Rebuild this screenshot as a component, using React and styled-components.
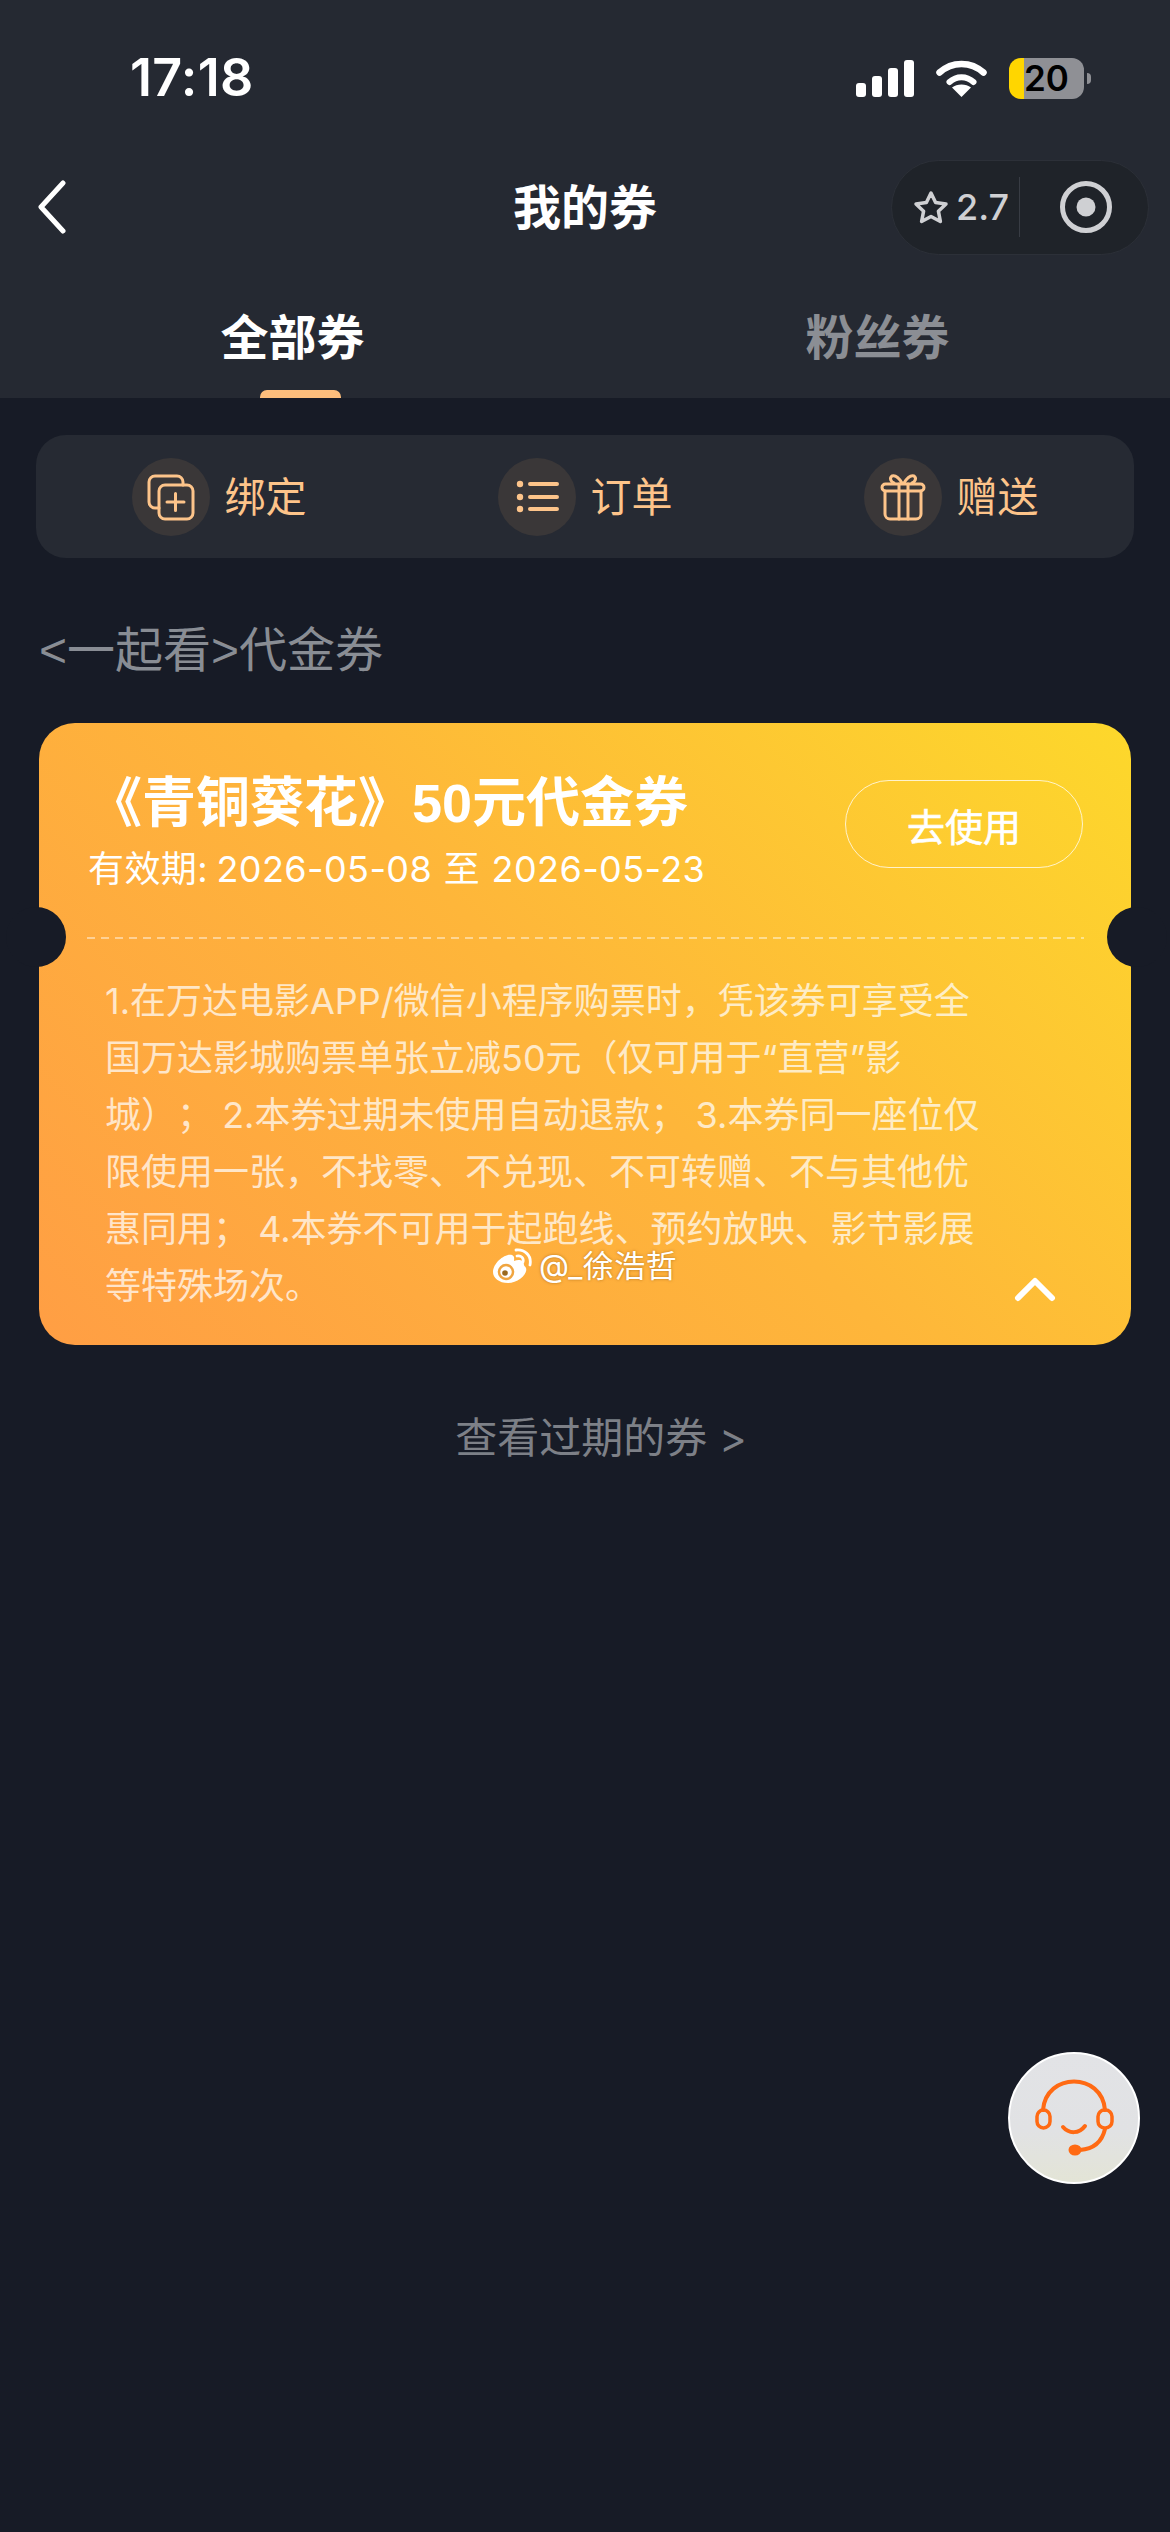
import React from "react";
import styled, { createGlobalStyle } from "styled-components";

const FONT = `Inter, "Noto Sans CJK SC", sans-serif`;
const ARIAL_FONT = `"Liberation Sans", "Noto Sans CJK SC", sans-serif`;

const Global = createGlobalStyle`
  html, body { margin: 0; padding: 0; background: #171b26; }
  * { box-sizing: border-box; }
`;

const Page = styled.div`
  position: relative;
  width: 1170px;
  height: 2532px;
  overflow: hidden;
  background: #171b26;
  font-family: ${FONT};
  text-spacing-trim: space-all;
`;

const Header = styled.header`
  height: 398px;
  background: #252932;
  display: flex;
  flex-direction: column;
`;

const StatusBar = styled.div`
  height: 154px;
  padding: 2px 86px 0 130px;
  display: flex;
  align-items: center;
  justify-content: space-between;
`;

const Time = styled.span`
  font-size: 52px;
  font-weight: 600;
  line-height: 60px;
  color: #fff;
  letter-spacing: 0.3px;
`;

const StatusIcons = styled.div`
  display: flex;
  align-items: center;
`;

const Signal = styled.svg`
  width: 58px;
  height: 37px;
  margin-right: 22px;
`;

const Wifi = styled.svg`
  width: 51px;
  height: 37px;
  margin-right: 22px;
`;

const Battery = styled.div`
  position: relative;
  width: 75px;
  height: 41px;
  border-radius: 12px;
  background: linear-gradient(90deg, #ffd600 0 15px, #8f9095 15px);
  display: flex;
  align-items: center;
  justify-content: center;
  color: #000;
  font-size: 35px;
  font-weight: 600;
  &::after {
    content: "";
    position: absolute;
    right: -7px;
    top: 15px;
    width: 4px;
    height: 11px;
    border-radius: 0 4px 4px 0;
    background: #8f9095;
  }
`;

const Nav = styled.div`
  height: 106px;
  padding: 0 21px;
  display: grid;
  grid-template-columns: 1fr auto 1fr;
  align-items: center;
`;

const Back = styled.svg`
  width: 30px;
  height: 54px;
  margin-left: 16px;
`;

const Title = styled.h1`
  margin: 0;
  padding-top: 2px;
  font-size: 48px;
  line-height: 60px;
  font-weight: 700;
  color: #fff;
`;

const Capsule = styled.div`
  justify-self: end;
  width: 258px;
  height: 95px;
  border-radius: 48px;
  background: #1f2329;
  border: 1px solid #2c3038;
  display: flex;
  align-items: center;
  padding-left: 21px;
`;

const Rating = styled.div`
  width: 107px;
  height: 60px;
  display: flex;
  align-items: center;
  gap: 7px;
  color: #cfd0d3;
  font-size: 36px;
  font-weight: 500;
  border-right: 1px solid #383c44;
`;

const Target = styled.svg`
  width: 54px;
  height: 54px;
  margin-left: 39px;
`;

const Tabs = styled.nav`
  flex: 1;
  display: grid;
  grid-template-columns: 1fr 1fr;
`;

const Tab = styled.div`
  position: relative;
  padding-top: 54px;
  text-align: center;
  font-size: 48px;
  line-height: 48px;
  font-weight: 700;
  color: ${(p) => (p.$active ? "#fff" : "#8b8e94")};
`;

const TabMark = styled.span`
  position: absolute;
  left: 260px;
  bottom: 0;
  width: 81px;
  height: 8px;
  border-radius: 7px 7px 0 0;
  background: #fdbe7c;
`;

const Main = styled.main`
  padding: 37px 36px 0;
`;

const Toolbar = styled.div`
  height: 123px;
  border-radius: 30px;
  background: #262a33;
  display: flex;
  align-items: center;
  justify-content: space-around;
`;

const Action = styled.div`
  display: flex;
  align-items: center;
  gap: 15px;
  font-size: 41px;
  line-height: 48px;
  color: #fdc48a;
`;

const ActionIcon = styled.svg`
  width: 78px;
  height: 78px;
  border-radius: 50%;
  background: #3a3738;
  fill: none;
  stroke: #fdc48a;
  stroke-width: 3;
  stroke-linecap: round;
  stroke-linejoin: round;
`;

const SectionTitle = styled.h2`
  margin: 63px 0 42px;
  padding-left: 3px;
  font-family: ${ARIAL_FONT};
  font-size: 48px;
  line-height: 60px;
  font-weight: 400;
  color: #898d94;
`;

const Ticket = styled.section`
  position: relative;
  margin: 0 3px;
  border-radius: 36px;
  color: #fff;
  background: linear-gradient(45deg, #ff9e44 0%, #feb63a 50%, #fdd82b 100%);
`;

const Notch = styled.span`
  position: absolute;
  top: 184px;
  ${(p) => p.$side}: ${(p) => (p.$side === "left" ? "-33px" : "-36px")};
  width: 60px;
  height: 60px;
  border-radius: 50%;
  background: #171b26;
`;

const TicketHead = styled.div`
  padding: 50px 48px 46px 49px;
  display: flex;
  justify-content: space-between;
  align-items: flex-start;
`;

const TicketName = styled.div`
  font-family: ${ARIAL_FONT};
  font-size: 54px;
  line-height: 60px;
  font-weight: 700;
`;

const TicketDate = styled.div`
  margin-top: 14px;
  font-size: 36px;
  line-height: 44px;
  letter-spacing: 0.4px;
  word-spacing: 1px;
`;

const DateLabel = styled.span`
  margin-right: -3px;
`;

const UseButton = styled.div`
  margin-top: 7px;
  width: 238px;
  height: 88px;
  border-radius: 44px;
  border: 1px solid rgba(255, 255, 255, 0.75);
  display: flex;
  align-items: center;
  justify-content: center;
  font-size: 38px;
  -webkit-text-stroke: 0.6px #fff;
`;

const Dashes = styled.div`
  height: 2px;
  margin: 0 47px 0 48px;
  background: repeating-linear-gradient(90deg, rgba(255, 255, 255, 0.45) 0 8px, transparent 8px 14px);
`;

const Rules = styled.p`
  margin: 0;
  padding: 34px 146px 30px 66px;
  font-size: 36px;
  line-height: 57px;
  word-spacing: -1px;
  color: rgba(255, 255, 255, 0.72);
`;

const Collapse = styled.svg`
  position: absolute;
  left: 975px;
  top: 553px;
  width: 42px;
  height: 26px;
`;

const Watermark = styled.div`
  position: absolute;
  left: 452px;
  top: 524px;
  display: flex;
  align-items: center;
  gap: 6px;
  font-size: 31px;
  letter-spacing: 0.5px;
  line-height: 38px;
  color: #fff;
  text-shadow: 0 0 3px rgba(120, 70, 0, 0.55);
`;

const Expired = styled.div`
  margin-top: 63px;
  padding-left: 32px;
  text-align: center;
  font-size: 42px;
  line-height: 60px;
  color: #7d8087;
`;

const Service = styled.div`
  position: absolute;
  left: 1008px;
  top: 2052px;
  width: 132px;
  height: 132px;
  border-radius: 50%;
  border: 2px solid #fff;
  background: linear-gradient(180deg, #e2e3e6 0%, #e1e2e4 60%, #e3e4d6 100%);
`;

const ServiceIcon = styled.svg`
  display: block;
  width: 128px;
  height: 128px;
  fill: none;
  stroke: #ff6a13;
  stroke-width: 4;
  stroke-linecap: round;
`;

const BindIcon = () => (
  <ActionIcon viewBox="0 0 78 78">
    <path d="M27 50h-4a6 6 0 0 1-6-6V24a6 6 0 0 1 6-6h22a6 6 0 0 1 6 6v3" />
    <rect x="27" y="27" width="34" height="34" rx="6" />
    <path d="M35 44h17M43.500 35.500v17" />
  </ActionIcon>
);

const OrderIcon = () => (
  <ActionIcon viewBox="0 0 78 78">
    <g stroke="none" fill="#fdc48a">
      <circle cx="22" cy="26" r="3.200" />
      <circle cx="22" cy="39" r="3.200" />
      <circle cx="22" cy="51" r="3.200" />
    </g>
    <path d="M32 26h27M32 39h27M32 51h27" strokeWidth="4" />
  </ActionIcon>
);

const GiftIcon = () => (
  <ActionIcon viewBox="0 0 78 78">
    <rect x="18" y="26" width="42" height="7" rx="3.500" />
    <path d="M21 33v23a5 5 0 0 0 5 5h26a5 5 0 0 0 5-5V33" />
    <path d="M35 26v35M44 26v35" />
    <path d="M38 25c-3-5-7-8-10-7-3 2-1 6 2 7M40 25c3-5 7-8 10-7 3 2 1 6-2 7" />
  </ActionIcon>
);

export default function App() {
  return (
    <Page>
      <Global />
      <Header>
        <StatusBar>
          <Time>17:18</Time>
          <StatusIcons>
            <Signal viewBox="0 0 58 37" fill="#fff">
              <rect x="0" y="23" width="10" height="14" rx="3" />
              <rect x="16" y="16" width="10" height="21" rx="3" />
              <rect x="32" y="8" width="10" height="29" rx="3" />
              <rect x="48" y="0" width="10" height="37" rx="3" />
            </Signal>
            <Wifi viewBox="0 0 51 37">
              <g fill="none" stroke="#fff" strokeLinecap="round">
                <path d="M3.500 12.500C16 1 35 1 47.500 12.500" strokeWidth="6.500" />
                <path d="M13.500 22C20.500 15.500 30.500 15.500 37.500 22" strokeWidth="6" />
              </g>
              <path d="M25.500 37L16 27.500C21 23.500 30 23.500 35 27.500Z" fill="#fff" />
            </Wifi>
            <Battery>20</Battery>
          </StatusIcons>
        </StatusBar>
        <Nav>
          <Back viewBox="0 0 30 54" fill="none" stroke="#fff" strokeWidth="5" strokeLinecap="round" strokeLinejoin="round">
            <path d="M26 3L4 27l22 24" />
          </Back>
          <Title>我的券</Title>
          <Capsule>
            <Rating>
              <svg width="36" height="34" viewBox="0 0 36 34" fill="none" stroke="#cfd0d3" strokeWidth="3.500" strokeLinejoin="round">
                <path d="M18 3l4.600 9.600 10.400 1.400-7.600 7.200 2 10.300L18 26.500 8.600 31.500l2-10.300L3 14l10.400-1.400z" />
              </svg>
              2.7
            </Rating>
            <Target viewBox="0 0 54 54">
              <circle cx="27" cy="27" r="23.500" fill="none" stroke="#cfd0d3" strokeWidth="5" />
              <circle cx="27" cy="27" r="9.500" fill="#cfd0d3" />
            </Target>
          </Capsule>
        </Nav>
        <Tabs>
          <Tab $active>
            全部券
            <TabMark />
          </Tab>
          <Tab>粉丝券</Tab>
        </Tabs>
      </Header>
      <Main>
        <Toolbar>
          <Action>
            <BindIcon />
            绑定
          </Action>
          <Action>
            <OrderIcon />
            订单
          </Action>
          <Action>
            <GiftIcon />
            赠送
          </Action>
        </Toolbar>
        <SectionTitle>&lt;一起看&gt;代金券</SectionTitle>
        <Ticket>
          <Notch $side="left" />
          <Notch $side="right" />
          <TicketHead>
            <div>
              <TicketName>《青铜葵花》50元代金券</TicketName>
              <TicketDate>
                <DateLabel>有效期:</DateLabel> 2026-05-08 至 2026-05-23
              </TicketDate>
            </div>
            <UseButton>去使用</UseButton>
          </TicketHead>
          <Dashes />
          <Rules>
            1.在万达电影APP/微信小程序购票时，凭该券可享受全国万达影城购票单张立减50元（仅可用于“直营”影城）； 2.本券过期未使用自动退款； 3.本券同一座位仅限使用一张，不找零、不兑现、不可转赠、不与其他优惠同用； 4.本券不可用于起跑线、预约放映、影节影展等特殊场次。
          </Rules>
          <Collapse viewBox="0 0 42 26" fill="none" stroke="#fff" strokeWidth="6" strokeLinecap="round" strokeLinejoin="round">
            <path d="M4 22L21 5l17 17" />
          </Collapse>
          <Watermark>
            <svg width="42" height="36" viewBox="0 0 42 36">
              <path d="M2 24C2 15 14 5 21 7c3 1 2 5 2 6 5-2 10-1 10 4 0 1 1 1 2 3 2 6-8 15-18 15C8 35 2 30 2 24z" fill="#fff" />
              <circle cx="15" cy="24" r="7" fill="none" stroke="#f0a540" strokeWidth="2.500" />
              <circle cx="14" cy="25" r="2.800" fill="#9a6a20" />
              <g fill="none" stroke="#fff" strokeWidth="2.800" strokeLinecap="round">
                <path d="M26 8c4-1 7 2 6 6" />
                <path d="M25 2c8-1 16 5 14 15" />
              </g>
            </svg>
            @_徐浩哲
          </Watermark>
        </Ticket>
        <Expired>查看过期的券 &gt;</Expired>
      </Main>
      <Service>
        <ServiceIcon viewBox="0 0 128 128">
          <path d="M33 56C36 18 92 18 95 56" />
          <rect x="27" y="56" width="13" height="18" rx="6.500" strokeWidth="3.500" />
          <rect x="88" y="56" width="14" height="18" rx="6.500" strokeWidth="3.500" />
          <path d="M53 73c6 7 16 7 22-1" />
          <path d="M95 75c-3 13-12 20-25 21" />
          <ellipse cx="65" cy="96" rx="6.500" ry="5.500" fill="#ff6a13" stroke="none" />
        </ServiceIcon>
      </Service>
    </Page>
  );
}
